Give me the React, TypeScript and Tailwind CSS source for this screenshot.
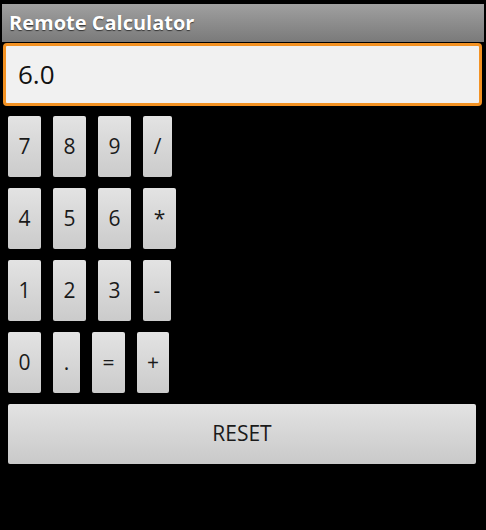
import React, {useState} from 'react';

const rows = [
    [{label: '7', w: 'w-[33px]'}, {label: '8', w: 'w-[33px]'}, {label: '9', w: 'w-[33px]'}, {label: '/', w: 'w-[29px]'}],
    [{label: '4', w: 'w-[33px]'}, {label: '5', w: 'w-[33px]'}, {label: '6', w: 'w-[33px]'}, {label: '*', w: 'w-[33px]'}],
    [{label: '1', w: 'w-[33px]'}, {label: '2', w: 'w-[33px]'}, {label: '3', w: 'w-[33px]'}, {label: '-', w: 'w-[28px]'}],
    [{label: '0', w: 'w-[33px]'}, {label: '.', w: 'w-[27px]'}, {label: '=', w: 'w-[33px]'}, {label: '+', w: 'w-[32px]'}],
];

const App = () => {
    const [display] = useState('6.0');

    return (
        <div className="w-[486px] h-[530px] bg-black pt-[4px] font-['Open_Sans',sans-serif]">
            {/* title bar */}
            <div className="mx-[2px] h-[38px] flex items-center pl-[7px] bg-gradient-to-b from-[#a0a0a0] to-[#7a7a7a]">
                <span className="text-white font-bold text-[20px] [text-shadow:0_1px_1px_rgba(0,0,0,0.6)]">
                    Remote Calculator
                </span>
            </div>

            {/* display */}
            <div className="mt-[1px] ml-[3px] mr-[4px] h-[63px] rounded-[4px] border-[3px] border-[#f39223] bg-[#f1f1f1] flex items-center pl-[12px]">
                <span className="text-[26px] text-[#111]">{display}</span>
            </div>

            {/* keypad */}
            <div className="mt-[10px] ml-[8px] flex flex-col gap-[11px]">
                {rows.map((row, i) => (
                    <div key={i} className="flex gap-[12px]">
                        {row.map((btn) => (
                            <div
                                key={btn.label}
                                className={`${btn.w} h-[61px] rounded-[2px] bg-gradient-to-b from-[#e3e3e3] to-[#cbcbcb] flex items-center justify-center text-[21px] text-[#1a1a1a]`}
                            >
                                {btn.label}
                            </div>
                        ))}
                    </div>
                ))}
            </div>

            <div className="mt-[11px] ml-[8px] w-[468px] h-[60px] rounded-[2px] bg-gradient-to-b from-[#e3e3e3] to-[#c9c9c9] flex items-center justify-center text-[21px] text-[#1a1a1a]">
                RESET
            </div>
        </div>
    );
};

export default App;
